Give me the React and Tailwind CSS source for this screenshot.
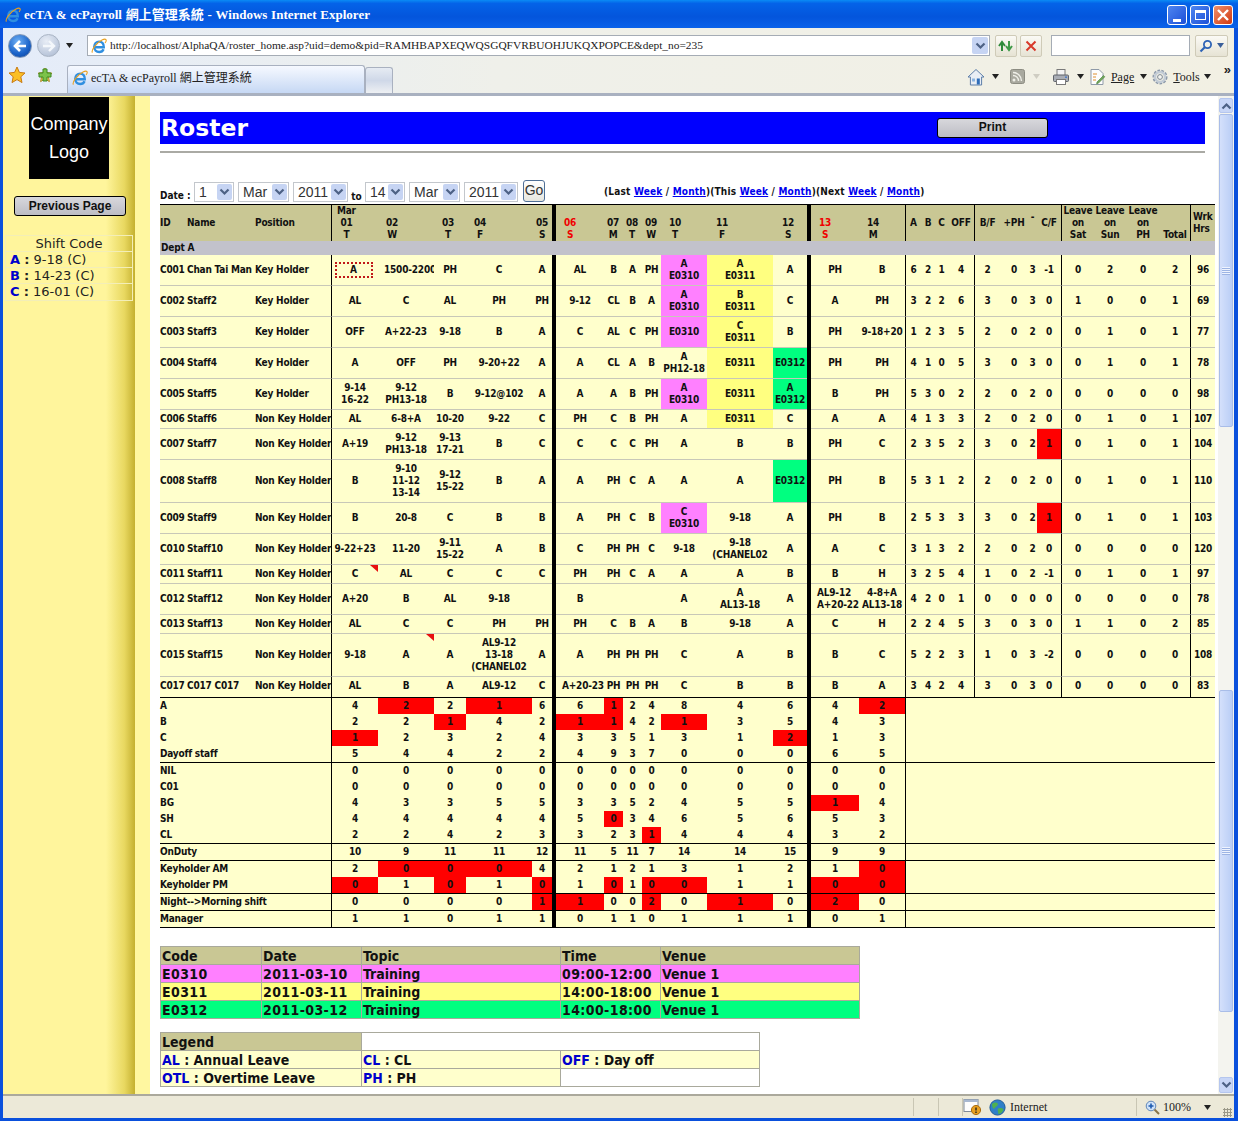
import React from 'react';

// roster grid column widths, one per column (left to right)
const COLS = [
  'w-[27px]', 'w-[68px]', 'w-[76px]',
  'w-[47px]', 'w-[56px]', 'w-[32px]', 'w-[66px]', 'w-[20px]', 'w-[4px]',
  'w-[48px]', 'w-[19px]', 'w-[19px]', 'w-[19px]', 'w-[46px]', 'w-[66px]', 'w-[34px]', 'w-[4px]',
  'w-[48px]', 'w-[46px]',
  'w-[16px]', 'w-[14px]', 'w-[13px]', 'w-[26px]',
  'w-[26px]', 'w-[28px]', 'w-[9px]', 'w-[24px]',
  'w-[33px]', 'w-[32px]', 'w-[34px]', 'w-[30px]',
  'w-[25px]',
];

const DAYS = [
  ['Mar\n01\nT', 'pl-[5px]'], ['02\nW', 'pl-[8px]'], ['03\nT', 'pl-[8px]'], ['04\nF', 'pl-[8px]'], ['05\nS', 'pl-[4px]'],
  ['06\nS', 'pl-[8px]', true], ['07\nM', 'pl-[3px]'], ['08\nT', 'pl-[3px]'], ['09\nW', 'pl-[3px]'], ['10\nT', 'pl-[8px]'], ['11\nF', 'pl-[9px]'], ['12\nS', 'pl-[9px]'],
  ['13\nS', 'pl-[8px]', true], ['14\nM', 'pl-[8px]'],
];

const TONE = {
  p: 'bg-[#ff80ff]',
  y: 'bg-[#ffff80]',
  g: 'bg-[#00ff80]',
  r: 'bg-[#ff0000]',
};

const p = (t) => ({ t, c: 'p' });
const y = (t) => ({ t, c: 'y' });
const g = (t) => ({ t, c: 'g' });
const r = (t) => ({ t, c: 'r' });
// text pushed off-centre so the cell clips its end, as the page does
const cut = (t) => ({ t, pad: true });

const STAFF = [
  { h: 'h-[31px]', id: 'C001', name: 'Chan Tai Man', pos: 'Key Holder', days: [{ t: 'A', focus: true }, cut('1500-2200'), 'PH', 'C', 'A', 'AL', 'B', 'A', 'PH', p('A\nE0310'), y('A\nE0311'), 'A', 'PH', 'B'], n: [6, 2, 1, 4, 2, 0, 3, -1, 0, 2, 0, 2, 96] },
  { h: 'h-[31px]', id: 'C002', name: 'Staff2', pos: 'Key Holder', days: ['AL', 'C', 'AL', 'PH', 'PH', '9-12', 'CL', 'B', 'A', p('A\nE0310'), y('B\nE0311'), 'C', 'A', 'PH'], n: [3, 2, 2, 6, 3, 0, 3, 0, 1, 0, 0, 1, 69] },
  { h: 'h-[31px]', id: 'C003', name: 'Staff3', pos: 'Key Holder', days: ['OFF', 'A+22-23', '9-18', 'B', 'A', 'C', 'AL', 'C', 'PH', p('E0310'), y('C\nE0311'), 'B', 'PH', '9-18+20'], n: [1, 2, 3, 5, 2, 0, 2, 0, 0, 1, 0, 1, 77] },
  { h: 'h-[31px]', id: 'C004', name: 'Staff4', pos: 'Key Holder', days: ['A', 'OFF', 'PH', '9-20+22', 'A', 'A', 'CL', 'A', 'B', 'A\nPH12-18', y('E0311'), g('E0312'), 'PH', 'PH'], n: [4, 1, 0, 5, 3, 0, 3, 0, 0, 1, 0, 1, 78] },
  { h: 'h-[31px]', id: 'C005', name: 'Staff5', pos: 'Key Holder', days: ['9-14\n16-22', '9-12\nPH13-18', 'B', '9-12@102', 'A', 'A', 'A', 'B', 'PH', p('A\nE0310'), y('E0311'), g('A\nE0312'), 'B', 'PH'], n: [5, 3, 0, 2, 2, 0, 2, 0, 0, 0, 0, 0, 98] },
  { h: 'h-[19px]', id: 'C006', name: 'Staff6', pos: 'Non Key Holder', days: ['AL', '6-8+A', '10-20', '9-22', 'C', 'PH', 'C', 'B', 'PH', 'A', y('E0311'), 'C', 'A', 'A'], n: [4, 1, 3, 3, 2, 0, 2, 0, 0, 1, 0, 1, 107] },
  { h: 'h-[31px]', id: 'C007', name: 'Staff7', pos: 'Non Key Holder', days: ['A+19', '9-12\nPH13-18', '9-13\n17-21', 'B', 'C', 'C', 'C', 'C', 'PH', 'A', 'B', 'B', 'PH', 'C'], n: [2, 3, 5, 2, 3, 0, 2, r(1), 0, 1, 0, 1, 104] },
  { h: 'h-[43px]', id: 'C008', name: 'Staff8', pos: 'Non Key Holder', days: ['B', '9-10\n11-12\n13-14', '9-12\n15-22', 'B', 'A', 'A', 'PH', 'C', 'A', 'A', 'A', g('E0312'), 'PH', 'B'], n: [5, 3, 1, 2, 2, 0, 2, 0, 0, 1, 0, 1, 110] },
  { h: 'h-[31px]', id: 'C009', name: 'Staff9', pos: 'Non Key Holder', days: ['B', '20-8', 'C', 'B', 'B', 'A', 'PH', 'C', 'B', p('C\nE0310'), '9-18', 'A', 'PH', 'B'], n: [2, 5, 3, 3, 3, 0, 2, r(1), 0, 1, 0, 1, 103] },
  { h: 'h-[31px]', id: 'C010', name: 'Staff10', pos: 'Non Key Holder', days: ['9-22+23', '11-20', '9-11\n15-22', 'A', 'B', 'C', 'PH', 'PH', 'C', '9-18', '9-18\n(CHANEL02', 'A', 'A', 'C'], n: [3, 1, 3, 2, 2, 0, 2, 0, 0, 0, 0, 0, 120] },
  { h: 'h-[19px]', id: 'C011', name: 'Staff11', pos: 'Non Key Holder', days: [{ t: 'C', tri: true }, 'AL', 'C', 'C', 'C', 'PH', 'PH', 'C', 'A', 'A', 'A', 'B', 'B', 'H'], n: [3, 2, 5, 4, 1, 0, 2, -1, 0, 1, 0, 1, 97] },
  { h: 'h-[31px]', id: 'C012', name: 'Staff12', pos: 'Non Key Holder', days: ['A+20', 'B', 'AL', '9-18', '', 'B', '', '', '', 'A', 'A\nAL13-18', 'A', cut('AL9-12\nA+20-22'), '4-8+A\nAL13-18'], n: [4, 2, 0, 1, 0, 0, 0, 0, 0, 0, 0, 0, 78] },
  { h: 'h-[19px]', id: 'C013', name: 'Staff13', pos: 'Non Key Holder', days: ['AL', 'C', 'C', 'PH', 'PH', 'PH', 'C', 'B', 'A', 'B', '9-18', 'A', 'C', 'H'], n: [2, 2, 4, 5, 3, 0, 3, 0, 1, 1, 0, 2, 85] },
  { h: 'h-[43px]', id: 'C015', name: 'Staff15', pos: 'Non Key Holder', days: ['9-18', { t: 'A', tri: true }, 'A', 'AL9-12\n13-18\n(CHANEL02', 'A', 'A', 'PH', 'PH', 'PH', 'C', 'A', 'B', 'B', 'C'], n: [5, 2, 2, 3, 1, 0, 3, -2, 0, 0, 0, 0, 108] },
  { h: 'h-[21px]', id: 'C017', name: 'C017', name2: 'C017', pos: 'Non Key Holder', days: ['AL', 'B', 'A', 'AL9-12', 'C', cut('A+20-23'), 'PH', 'PH', 'PH', 'C', 'B', 'B', 'B', 'A'], n: [3, 4, 2, 4, 3, 0, 3, 0, 0, 0, 0, 0, 83], last: true },
];

const SUMMARY = [
  { label: 'A', h: 'h-[16px]', v: [4, r(2), 2, r(1), 6, 6, r(1), 2, 4, 8, 4, 6, 4, r(2)] },
  { label: 'B', h: 'h-[16px]', v: [2, 2, r(1), 4, 2, r(1), r(1), 4, 2, r(1), 3, 5, 4, 3] },
  { label: 'C', h: 'h-[16px]', v: [r(1), 2, 3, 2, 4, 3, 3, 5, 1, 3, 1, r(2), 1, 3] },
  { label: 'Dayoff staff', h: 'h-[17px]', line: true, v: [5, 4, 4, 2, 2, 4, 9, 3, 7, 0, 0, 0, 6, 5] },
  { label: 'NIL', h: 'h-[16px]', v: [0, 0, 0, 0, 0, 0, 0, 0, 0, 0, 0, 0, 0, 0] },
  { label: 'C01', h: 'h-[16px]', v: [0, 0, 0, 0, 0, 0, 0, 0, 0, 0, 0, 0, 0, 0] },
  { label: 'BG', h: 'h-[16px]', v: [4, 3, 3, 5, 5, 3, 3, 5, 2, 4, 5, 5, r(1), 4] },
  { label: 'SH', h: 'h-[16px]', v: [4, 4, 4, 4, 4, 5, r(0), 3, 4, 6, 5, 6, 5, 3] },
  { label: 'CL', h: 'h-[17px]', line: true, v: [2, 2, 4, 2, 3, 3, 2, 3, r(1), 4, 4, 4, 3, 2] },
  { label: 'OnDuty', h: 'h-[17px]', line: true, v: [10, 9, 11, 11, 12, 11, 5, 11, 7, 14, 14, 15, 9, 9] },
  { label: 'Keyholder AM', h: 'h-[16px]', v: [2, r(0), r(0), r(0), 4, 2, 1, 2, 1, 3, 1, 2, 1, r(0)] },
  { label: 'Keyholder PM', h: 'h-[17px]', line: true, v: [r(0), 1, r(0), 1, r(0), 1, r(0), 1, r(0), r(0), 1, 1, r(0), r(0)] },
  { label: 'Night-->Morning shift', h: 'h-[17px]', line: true, v: [0, 0, 0, 0, r(1), r(1), 0, 0, r(2), 0, r(1), 0, r(2), 0] },
  { label: 'Manager', h: 'h-[17px]', line: true, v: [1, 1, 0, 1, 1, 0, 1, 1, 0, 1, 1, 1, 0, 1] },
];

const EVENTS = [
  { tone: 'bg-[#ff80ff]', cells: ['E0310', '2011-03-10', 'Training', '09:00-12:00', 'Venue 1'] },
  { tone: 'bg-[#ffff80]', cells: ['E0311', '2011-03-11', 'Training', '14:00-18:00', 'Venue 1'] },
  { tone: 'bg-[#00ff80]', cells: ['E0312', '2011-03-12', 'Training', '14:00-18:00', 'Venue 1'] },
];

const tableFont = "font-['DejaVu_Sans_Condensed','DejaVu_Sans',sans-serif]";

// --- small drawings ---
const IeLogo = ({ size = 16 }) => (
  <svg width={size} height={size} viewBox="0 0 16 16" className="shrink-0">
    <path d="M3.2 9.2 H12.8 C13 5.6 10.8 3.6 8.2 3.6 C5.4 3.6 3.2 5.8 3.2 9 C3.2 12 5.4 14 8.2 14 C10.2 14 11.8 13 12.6 11.2" fill="none" stroke="#2f8fe0" strokeWidth="2.4" />
    <path d="M1.4 14.6 C0 12.6 5 5 11 2 C13.4 0.8 15 0.8 15.2 2.2 C15.3 3 14.8 4 14 5" fill="none" stroke="#e8a020" strokeWidth="1.1" />
  </svg>
);

const Tri = ({ className = '' }) => (
  <svg width="7" height="5" viewBox="0 0 7 5" className={className}>
    <path d="M0 0 H7 L3.5 5 Z" fill="currentColor" />
  </svg>
);

const Star = () => (
  <svg width="18" height="18" viewBox="0 0 18 18">
    <path d="M9 1 L11.4 6.4 L17 7 L12.8 10.8 L14 16.6 L9 13.6 L4 16.6 L5.2 10.8 L1 7 L6.6 6.4 Z" fill="#fbbf24" stroke="#c97a10" strokeWidth="1" />
  </svg>
);

const AddFav = () => (
  <svg width="18" height="18" viewBox="0 0 18 18">
    <path d="M9 2 L11 6.6 L16 7.2 L12.4 10.6 L13.4 15.6 L9 13 L4.6 15.6 L5.6 10.6 L2 7.2 L7 6.6 Z" fill="#f5d060" stroke="#b08a20" strokeWidth="1" />
    <path d="M7 3 H11 V7 H15 V11 H11 V15 H7 V11 H3 V7 H7 Z" fill="#7cc24a" stroke="#3f8a25" strokeWidth="1" />
  </svg>
);

const Home = () => (
  <svg width="18" height="18" viewBox="0 0 18 18">
    <path d="M9 1.5 L17 9 H14.6 V17 H3.4 V9 H1 Z" fill="#e9eef5" stroke="#5d7ea8" strokeWidth="1" />
    <rect x="9.8" y="10.5" width="3" height="6" fill="#2f6db8" />
    <rect x="5" y="10.5" width="3" height="3" fill="#8cb4e0" />
  </svg>
);

const Rss = () => (
  <svg width="15" height="15" viewBox="0 0 15 15">
    <rect x="0.5" y="0.5" width="14" height="14" rx="2" fill="#a9a99f" stroke="#8c8c82" />
    <circle cx="4" cy="11" r="1.5" fill="#efefe8" />
    <path d="M3 6.5 A5.5 5.5 0 0 1 8.5 12 M3 3.5 A8.5 8.5 0 0 1 11.5 12" fill="none" stroke="#efefe8" strokeWidth="1.4" />
  </svg>
);

const Printer = () => (
  <svg width="18" height="18" viewBox="0 0 18 18">
    <rect x="5" y="1.5" width="8" height="6" fill="#f4f4f4" stroke="#7a7a7a" />
    <rect x="1.5" y="7" width="15" height="6.5" rx="1" fill="#a9adb5" stroke="#5f636b" />
    <rect x="4.5" y="11.5" width="9" height="5" fill="#fff" stroke="#7a7a7a" />
    <rect x="13" y="8.5" width="2" height="1.4" fill="#4a7bc8" />
  </svg>
);

const PageIcon = () => (
  <svg width="18" height="18" viewBox="0 0 18 18">
    <path d="M3 1.5 H11 L15 5.5 V16.5 H3 Z" fill="#fdfdfd" stroke="#8f9aa8" />
    <path d="M5 6 H9 M5 9 H8 M5 12 H8" stroke="#e09030" strokeWidth="1" />
    <path d="M9 14 L15.5 7.5 L16.8 8.8 L10.3 15.3 L8.6 15.8 Z" fill="#6fa85a" stroke="#4a7a3a" strokeWidth="0.6" />
  </svg>
);

const Gear = () => (
  <svg width="18" height="18" viewBox="0 0 18 18">
    <circle cx="9" cy="9" r="6" fill="none" stroke="#8a97a8" strokeWidth="3" strokeDasharray="2.4 1.2" />
    <circle cx="9" cy="9" r="5" fill="none" stroke="#c3ccd6" strokeWidth="2.4" />
    <circle cx="9" cy="9" r="2.4" fill="#f5f5f0" stroke="#7b8794" />
  </svg>
);

const Chevron = ({ className = '' }) => (
  <svg width="11" height="8" viewBox="0 0 11 8" className={className}>
    <path d="M1.5 1.5 L5.5 5.5 L9.5 1.5" fill="none" stroke="currentColor" strokeWidth="2.2" />
  </svg>
);

const Sel = ({ text, w }) => (
  <div className={`${w} h-[20px] flex items-stretch border border-[#c3c7cc] bg-white pl-[4px] pr-[1px] py-[1px]`}>
    <span className="flex-1 text-[14px] leading-[17px] font-normal text-[#333] font-['Liberation_Sans',sans-serif]">{text}</span>
    <span className="w-[15px] flex items-center justify-center rounded-[2px] bg-[#c6d4f3] text-[#4d6185]">
      <Chevron />
    </span>
  </div>
);

const ToolBtn = ({ children }) => (
  <div className="w-[22px] h-[22px] rounded-[2px] border border-[#cfcbb8] bg-[linear-gradient(#fbfaf5,#e6e3d4)] flex items-center justify-center">{children}</div>
);

const WinBtn = ({ className, children }) => (
  <div className={`w-[20px] h-[20px] rounded-[3px] border border-white flex items-center justify-center ${className}`}>{children}</div>
);

// one body cell of the grid
const Cell = ({ v, left, last }) => {
  const val = v !== null && typeof v === 'object' ? v : { t: v };
  const tone = val.c ? TONE[val.c] : '';
  return (
    <td className={`relative p-0 whitespace-pre overflow-hidden border-b ${last ? 'border-b-black pb-[2px]' : 'border-b-[#c8c8b8]'} ${val.pad ? 'text-left pl-[6px]' : 'text-center'} ${left ? 'border-l border-l-black' : ''} ${tone}`}>
      {val.focus ? (
        <span className="inline-block w-[38px] h-[16px] -ml-[3px] border-2 border-dotted border-[#c01818] leading-[12px]">{val.t}</span>
      ) : (
        val.t
      )}
      {val.tri && (
        <svg width="8" height="7" viewBox="0 0 8 7" className="absolute top-0 right-0">
          <path d="M0 0 H8 V7 Z" fill="#e80f0f" />
        </svg>
      )}
    </td>
  );
};

const Bar = () => <td className="p-0 bg-black" />;

const RosterTable = () => (
  <table className={`table-fixed w-[1055px] border-separate border-spacing-0 text-[10px] leading-[12px] tracking-[-0.2px] font-bold text-[#111] ${tableFont}`}>
    <colgroup>
      {COLS.map((c, i) => <col key={i} className={c} />)}
    </colgroup>
    <thead>
      <tr className="h-[36px] bg-[#c9c794]">
        <td className="p-0 border-t border-t-black text-left">ID</td>
        <td className="p-0 border-t border-t-black text-left">Name</td>
        <td className="p-0 border-t border-t-black text-left">Position</td>
        {DAYS.map(([txt, pad, sun], i) => (
          <React.Fragment key={txt}>
            <td className={`p-0 align-bottom overflow-hidden whitespace-pre border-t border-t-black text-left ${pad} ${i === 0 ? 'border-l border-l-black' : ''} ${sun ? 'text-[#f00000]' : ''}`}>
              <span className="inline-block text-center">{txt}</span>
            </td>
            {(i === 4 || i === 11) && <td className="p-0 bg-black" />}
          </React.Fragment>
        ))}
        <td className="p-0 border-t border-t-black border-l border-l-black text-center">A</td>
        <td className="p-0 border-t border-t-black text-center">B</td>
        <td className="p-0 border-t border-t-black text-center">C</td>
        <td className="p-0 border-t border-t-black text-center">OFF</td>
        <td className="p-0 border-t border-t-black border-l border-l-black text-center">B/F</td>
        <td className="p-0 border-t border-t-black text-center">+PH</td>
        <td className="p-0 pb-[12px] border-t border-t-black text-center">-</td>
        <td className="p-0 border-t border-t-black text-center">C/F</td>
        <td className="p-0 border-t border-t-black border-l border-l-black text-center whitespace-pre">{'Leave\non\nSat'}</td>
        <td className="p-0 border-t border-t-black text-center whitespace-pre">{'Leave\non\nSun'}</td>
        <td className="p-0 border-t border-t-black text-center whitespace-pre">{'Leave\non\nPH'}</td>
        <td className="p-0 border-t border-t-black text-center align-bottom">Total</td>
        <td className="p-0 pl-[2px] border-t border-t-black border-l border-l-black text-left whitespace-pre overflow-hidden">{'Wrk\nHrs'}</td>
      </tr>
      <tr className="h-[14px] bg-[#c2c2cb]">
        <td colSpan={32} className="p-0 pl-[1px] text-left">Dept A</td>
      </tr>
    </thead>
    <tbody className="bg-[#ffffcc]">
      {STAFF.map((s) => {
        const base = `p-0 whitespace-nowrap overflow-hidden border-b ${s.last ? 'border-b-black pb-[2px]' : 'border-b-[#c8c8b8]'}`;
        return (
          <tr key={s.id} className={s.h}>
            <td className={base}>{s.id}</td>
            <td className={base}>{s.name}{s.name2 ? ` ${s.name2}` : ''}</td>
            <td className={base}>{s.pos}</td>
            {s.days.map((d, i) => (
              <React.Fragment key={i}>
                <Cell v={d} left={i === 0} last={s.last} />
                {(i === 4 || i === 11) && <Bar />}
              </React.Fragment>
            ))}
            {s.n.map((d, i) => (
              <Cell key={i} v={d} left={i === 0 || i === 4 || i === 8 || i === 12} last={s.last} />
            ))}
          </tr>
        );
      })}
      {SUMMARY.map((row) => {
        const line = row.line ? 'border-b border-b-black' : '';
        return (
          <tr key={row.label} className={row.h}>
            <td colSpan={3} className={`p-0 whitespace-nowrap ${line}`}>{row.label}</td>
            {row.v.map((v, i) => {
              const val = typeof v === 'object' ? v : { t: v };
              return (
                <React.Fragment key={i}>
                  <td className={`p-0 text-center ${line} ${i === 0 ? 'border-l border-l-black' : ''} ${val.c ? TONE[val.c] : ''}`}>{val.t}</td>
                  {(i === 4 || i === 11) && <Bar />}
                </React.Fragment>
              );
            })}
            <td colSpan={13} className={`p-0 border-l border-l-black ${line}`} />
          </tr>
        );
      })}
    </tbody>
  </table>
);

const Legend = () => {
  const cell = 'border border-[#a9a99c] p-0 pl-[1px] h-[18px]';
  const item = (k, v) => (
    <>
      <span className="text-[#0000cc]">{k}</span> : {v}
    </>
  );
  return (
    <table className={`table-fixed w-[599px] mt-[13px] border-collapse text-[14px] leading-[16px] font-bold text-[#111] ${tableFont}`}>
      <colgroup>
        <col className="w-[201px]" />
        <col className="w-[199px]" />
        <col className="w-[199px]" />
      </colgroup>
      <tbody>
        <tr>
          <td className={`${cell} bg-[#c9c794]`}>Legend</td>
          <td colSpan={2} className={cell} />
        </tr>
        <tr className="bg-[#ffffcc]">
          <td className={cell}>{item('AL', 'Annual Leave')}</td>
          <td className={cell}>{item('CL', 'CL')}</td>
          <td className={cell}>{item('OFF', 'Day off')}</td>
        </tr>
        <tr>
          <td className={`${cell} bg-[#ffffcc]`}>{item('OTL', 'Overtime Leave')}</td>
          <td className={`${cell} bg-[#ffffcc]`}>{item('PH', 'PH')}</td>
          <td className={cell} />
        </tr>
      </tbody>
    </table>
  );
};

const EventTable = () => {
  const cell = 'border border-[#a9a99c] p-0 pl-[1px] h-[18px]';
  return (
    <table className={`table-fixed w-[699px] mt-[18px] border-collapse text-[14px] leading-[16px] font-bold text-[#111] ${tableFont}`}>
      <colgroup>
        <col className="w-[101px]" />
        <col className="w-[100px]" />
        <col className="w-[199px]" />
        <col className="w-[100px]" />
        <col className="w-[199px]" />
      </colgroup>
      <tbody>
        <tr className="bg-[#c9c794]">
          {['Code', 'Date', 'Topic', 'Time', 'Venue'].map((h) => <td key={h} className={cell}>{h}</td>)}
        </tr>
        {EVENTS.map((e) => (
          <tr key={e.cells[0]} className={e.tone}>
            {e.cells.map((c, i) => (
              <td key={i} className={`${cell} ${i === 2 || i === 4 ? '' : 'tracking-[0.4px]'}`}>{c}</td>
            ))}
          </tr>
        ))}
      </tbody>
    </table>
  );
};

const Sidebar = () => (
  <div className="w-[147px] flex shrink-0 bg-[#fff7a0]">
    <div className="w-[132px] flex flex-col items-center bg-[linear-gradient(90deg,#fff59c_0%,#fff59c_78%,#e8d860_92%,#c4b030_100%)]">
      <div className="mt-[1px] w-[80px] h-[82px] bg-black text-white text-[18px] leading-[28px] text-center pt-[13px] font-['Liberation_Sans',sans-serif]">
        Company<br />Logo
      </div>
      <div className="mt-[17px] ml-[2px] w-[112px] h-[20px] rounded-[3px] border border-black bg-[linear-gradient(#d8d8dc,#bdbdc4)] text-center text-[12px] leading-[18px] font-bold text-[#111] font-['Liberation_Sans',sans-serif]">
        Previous Page
      </div>
      <div className="mt-[19px] w-[128px] border border-[#f3eeb8] text-[13px] leading-[15px] text-[#222] font-['DejaVu_Sans',sans-serif]">
        <div className="h-[16px] text-center border-b border-[#f3eeb8]">Shift Code</div>
        {[['A', '9-18 (C)'], ['B', '14-23 (C)'], ['C', '16-01 (C)']].map(([k, v], i) => (
          <div key={k} className={`h-[16px] pl-[4px] ${i < 2 ? 'border-b border-[#f3eeb8]' : ''}`}>
            <span className="font-bold text-[#0000cc]">{k}</span> <b>:</b> {v}
          </div>
        ))}
      </div>
    </div>
  </div>
);

const Thumb = ({ className }) => (
  <div className={`${className} mx-[1px] rounded-[2px] border border-[#a9bde8] bg-[linear-gradient(90deg,#d4e0fb,#bacef6)] flex items-center justify-center`}>
    <div className="w-[8px] h-[8px] bg-[repeating-linear-gradient(#eef3fe_0_1px,#9db4e4_1px_2px)]" />
  </div>
);

const ScrollBar = () => (
  <div className="w-[16px] shrink-0 flex flex-col bg-[#f4f4ef]">
    <div className="mt-[2px] mx-[1px] h-[15px] rounded-[2px] border border-[#b5c6ee] bg-[#c8d6f7] flex items-center justify-center text-[#4d6185]">
      <Chevron className="rotate-180" />
    </div>
    <Thumb className="mt-[1px] h-[313px]" />
    <Thumb className="mt-[263px] h-[322px]" />
    <div className="flex-1" />
    <div className="mb-[1px] mx-[1px] h-[16px] rounded-[2px] border border-[#b5c6ee] bg-[#c8d6f7] flex items-center justify-center text-[#4d6185]">
      <Chevron />
    </div>
  </div>
);

const LinkGroup = ({ label }) => (
  <span>
    ({label} <a className="text-[#0000ee] underline">Week</a> / <a className="text-[#0000ee] underline">Month</a>)
  </span>
);

const DateRow = () => (
  <div className={`mt-[27px] h-[24px] flex items-start text-[10px] font-bold text-[#111] ${tableFont}`}>
    <span className="w-[34px] mt-[10px] leading-[12px]">Date :</span>
    <div className="mt-[2px] flex gap-[4px]">
      <Sel text="1" w="w-[40px]" />
      <Sel text="Mar" w="w-[51px]" />
      <Sel text="2011" w="w-[55px]" />
    </div>
    <span className="w-[17px] mt-[11px] text-center leading-[12px]">to</span>
    <div className="mt-[2px] flex gap-[4px]">
      <Sel text="14" w="w-[40px]" />
      <Sel text="Mar" w="w-[51px]" />
      <Sel text="2011" w="w-[54px]" />
    </div>
    <div className="ml-[5px] w-[22px] h-[22px] rounded-[3px] border border-[#4f6f96] bg-[linear-gradient(#fff,#e6e6de)] text-[14px] leading-[19px] text-center font-normal text-[#333] font-['Liberation_Sans',sans-serif]">Go</div>
    <div className="ml-[59px] mt-[6px] leading-[12px] tracking-[0.2px] whitespace-nowrap">
      <LinkGroup label="Last" /><LinkGroup label="This" /><LinkGroup label="Next" />
    </div>
  </div>
);

const serifUi = "font-['Liberation_Serif','Noto_Sans_CJK_TC',serif]";

const App = () => (
  <div className="w-[1238px] h-[1131px] bg-white overflow-hidden">
    <div className="h-[1121px] flex flex-col bg-[#0a50dc]">
      {/* title bar */}
      <div className="h-[28px] shrink-0 flex items-center pt-[2px] pl-[5px] pr-[5px] bg-[linear-gradient(#0a8bf5_0%,#0463e8_12%,#0455dc_60%,#0a62ea_100%)]">
        <IeLogo />
        <span className={`ml-[3px] flex-1 text-[13px] font-bold text-white [word-spacing:0.5px] ${serifUi}`}>ecTA &amp; ecPayroll 網上管理系統 - Windows Internet Explorer</span>
        <div className="flex gap-[3px]">
          <WinBtn className="bg-[linear-gradient(135deg,#4f86f0,#1c50d8)] items-end pb-[2px]"><div className="w-[8px] h-[3px] bg-white" /></WinBtn>
          <WinBtn className="bg-[linear-gradient(135deg,#4f86f0,#1c50d8)]"><div className="w-[11px] h-[10px] border border-white border-t-[3px]" /></WinBtn>
          <WinBtn className="bg-[linear-gradient(135deg,#f0906c,#d03810)]">
            <svg width="12" height="12" viewBox="0 0 12 12"><path d="M1 1 L11 11 M11 1 L1 11" stroke="#fff" strokeWidth="2.4" /></svg>
          </WinBtn>
        </div>
      </div>

      <div className="flex-1 flex flex-col ml-[3px] mr-[4px] min-h-0">
        {/* address row */}
        <div className="h-[36px] shrink-0 flex items-center pb-[1px] bg-[linear-gradient(90deg,#e4ecfa,#eff0ea_40%,#f2f0e3)]">
          <div className="ml-[5px] w-[24px] h-[24px] rounded-full border border-[#7f96b8] bg-[radial-gradient(circle_at_40%_30%,#6fb0f5,#1a62c8_60%,#0c3f95)] flex items-center justify-center">
            <svg width="14" height="12" viewBox="0 0 14 12"><path d="M7 1 L2 6 L7 11 M2 6 H13" fill="none" stroke="#fff" strokeWidth="2.6" /></svg>
          </div>
          <div className="ml-[5px] w-[23px] h-[23px] rounded-full border border-[#a9b4c4] bg-[radial-gradient(circle_at_40%_30%,#e8edf6,#bcc8dc_70%,#a5b2c8)] flex items-center justify-center">
            <svg width="14" height="12" viewBox="0 0 14 12"><path d="M7 1 L12 6 L7 11 M12 6 H1" fill="none" stroke="#f4f7fb" strokeWidth="2.4" /></svg>
          </div>
          <Tri className="ml-[6px] text-[#222]" />
          <div className="ml-[14px] w-[903px] h-[21px] flex items-center border border-[#a5acb5] bg-white pl-[3px] pr-[1px]">
            <IeLogo />
            <span className={`ml-[3px] flex-1 text-[11.4px] text-[#222] whitespace-nowrap overflow-hidden ${serifUi}`}>http://localhost/AlphaQA/roster_home.asp?uid=demo&amp;pid=RAMHBAPXEQWQSGQFVRBUOHJUKQXPOPCE&amp;dept_no=235</span>
            <span className="w-[16px] h-[17px] flex items-center justify-center rounded-[2px] bg-[#c6d4f3] text-[#4d6185]"><Chevron /></span>
          </div>
          <div className="ml-[5px]">
            <ToolBtn>
              <svg width="16" height="14" viewBox="0 0 16 14"><path d="M4 12 V4 M1 7 L4 3 L7 7" fill="none" stroke="#2f8a3a" strokeWidth="2" /><path d="M11 2 V10 M8 7 L11 11 L14 7" fill="none" stroke="#3f9a48" strokeWidth="2" /></svg>
            </ToolBtn>
          </div>
          <div className="ml-[3px]">
            <ToolBtn>
              <svg width="12" height="12" viewBox="0 0 12 12"><path d="M1.5 1.5 L10.5 10.5 M10.5 1.5 L1.5 10.5" stroke="#d8392b" strokeWidth="2" /></svg>
            </ToolBtn>
          </div>
          <div className="ml-[9px] w-[139px] h-[21px] border border-[#a5acb5] bg-white" />
          <div className="ml-[5px] w-[33px] h-[22px] rounded-[2px] border border-[#cfcbb8] bg-[linear-gradient(#fbfaf5,#e6e3d4)] flex items-center justify-center gap-[4px]">
            <svg width="14" height="14" viewBox="0 0 14 14"><circle cx="8.5" cy="5.5" r="3.6" fill="none" stroke="#2d62b5" strokeWidth="1.8" /><path d="M6 8 L1.5 12.5" stroke="#2d62b5" strokeWidth="2.2" /></svg>
            <Tri className="text-[#3a5f9a]" />
          </div>
        </div>

        {/* tab row */}
        <div className="h-[32px] shrink-0 flex bg-[linear-gradient(90deg,#e4ecfa,#eff0ea_40%,#f2f0e3)] border-b-[3px] border-b-[#a9b1c0]">
          <div className="ml-[5px] mt-[2px]"><Star /></div>
          <div className="ml-[10px] mt-[2px]"><AddFav /></div>
          <div className="ml-[13px] mt-[1px] w-[298px] h-[28px] flex items-center pl-[4px] pb-[3px] rounded-t-[3px] border border-b-0 border-[#a9b1c0] bg-[linear-gradient(#f6f9ff,#c6d8f4)]">
            <IeLogo />
            <span className={`ml-[3px] text-[12px] text-[#222] ${serifUi}`}>ecTA &amp; ecPayroll 網上管理系統</span>
          </div>
          <div className="mt-[3px] w-[28px] h-[26px] rounded-t-[3px] border border-b-0 border-[#a9b1c0] bg-[linear-gradient(#e6ebf3,#cfd8e8_50%,#eef0f3)]" />
          <div className="flex-1" />
          <div className={`flex items-center mb-[4px] text-[12px] text-[#222] ${serifUi}`}>
            <Home />
            <Tri className="ml-[7px]" />
            <div className="ml-[11px]"><Rss /></div>
            <Tri className="ml-[8px] text-[#cfcdc2]" />
            <div className="ml-[12px]"><Printer /></div>
            <Tri className="ml-[7px]" />
            <div className="ml-[4px]"><PageIcon /></div>
            <span className="ml-[5px] underline">Page</span>
            <Tri className="ml-[6px]" />
            <div className="ml-[4px]"><Gear /></div>
            <span className="ml-[4px]"><span className="underline">T</span>ools</span>
            <Tri className="ml-[4px]" />
            <span className="ml-[13px] mr-[3px] -mt-[14px] text-[13px] font-bold font-['Liberation_Sans',sans-serif]">»</span>
          </div>
        </div>

        {/* page */}
        <div className="h-[998px] shrink-0 flex bg-white">
          <Sidebar />
          <div className="flex-1 min-w-0 pl-[10px] pt-[16px] overflow-hidden bg-white">
            <div className="w-[1045px] h-[32px] flex items-center bg-[#0000ff]">
              <span className="ml-[1px] pt-[1px] flex-1 text-[23.5px] leading-[31px] font-bold text-white font-['DejaVu_Sans',sans-serif]">Roster</span>
              <div className="mr-[157px] w-[111px] h-[20px] rounded-[3px] border border-black bg-[linear-gradient(#d8d8dc,#bdbdc4)] text-center text-[12px] leading-[17px] font-bold text-[#111] font-['Liberation_Sans',sans-serif]">Print</div>
            </div>
            <div className="mt-[7px] w-[1045px] h-[2px] bg-[#aaaaa4]" />
            <DateRow />
            <RosterTable />
            <EventTable />
            <Legend />
          </div>
          <ScrollBar />
        </div>

        {/* status bar */}
        <div className={`h-[24px] shrink-0 flex items-center bg-[#ece9d8] border-t-2 border-t-[#aba99c] text-[12px] text-[#222] ${serifUi}`}>
          <div className="flex-1" />
          <div className="w-[1px] h-[18px] bg-[#c9c6b4]" />
          <div className="ml-[24px] w-[1px] h-[18px] bg-[#c9c6b4]" />
          <div className="ml-[23px] w-[1px] h-[18px] bg-[#c9c6b4]" />
          <svg width="20" height="18" viewBox="0 0 20 18">
            <rect x="1" y="1.5" width="14" height="12" fill="#fdfdfd" stroke="#7f8a98" />
            <rect x="1" y="1.5" width="14" height="2.5" fill="#a8b8d0" />
            <circle cx="13" cy="12" r="4.6" fill="#e8a020" stroke="#a86c10" />
            <path d="M13 9.5 V12.5 M13 13.5 V15" stroke="#222" strokeWidth="1.4" />
          </svg>
          <svg width="17" height="17" viewBox="0 0 17 17" className="ml-[6px]">
            <circle cx="8.5" cy="8.5" r="7.6" fill="#2f7fc8" stroke="#1f5c98" />
            <path d="M3 5 C5 3 8 3 9 5 C9 7 6 8 5 10 C3.5 9.5 3 7 3 5 Z M9 9.5 C11 8.5 14 9 14.6 10.5 C13.5 13.5 11 15 9.5 15 C9 13 8.4 11 9 9.5 Z" fill="#4fb050" />
          </svg>
          <span className="ml-[4px] w-[40px]">Internet</span>
          <div className="ml-[86px] w-[1px] h-[18px] bg-[#c9c6b4]" />
          <svg width="15" height="15" viewBox="0 0 15 15" className="ml-[8px]">
            <circle cx="6" cy="6" r="4.8" fill="#cfe2f8" stroke="#5f86b8" />
            <path d="M6 3.5 V8.5 M3.5 6 H8.5" stroke="#1f5cb0" strokeWidth="1.6" />
            <path d="M9.5 9.5 L14 14" stroke="#8a7448" strokeWidth="2" />
          </svg>
          <span className="ml-[3px] w-[30px]">100%</span>
          <Tri className="ml-[11px] text-[#222]" />
          <div className="ml-[12px] mr-[2px] w-[9px] h-[9px] self-end mb-[1px] bg-[radial-gradient(#9a9888_1px,transparent_1.2px)] bg-[length:3px_3px]" />
        </div>
      </div>
    </div>
  </div>
);

export default App;
